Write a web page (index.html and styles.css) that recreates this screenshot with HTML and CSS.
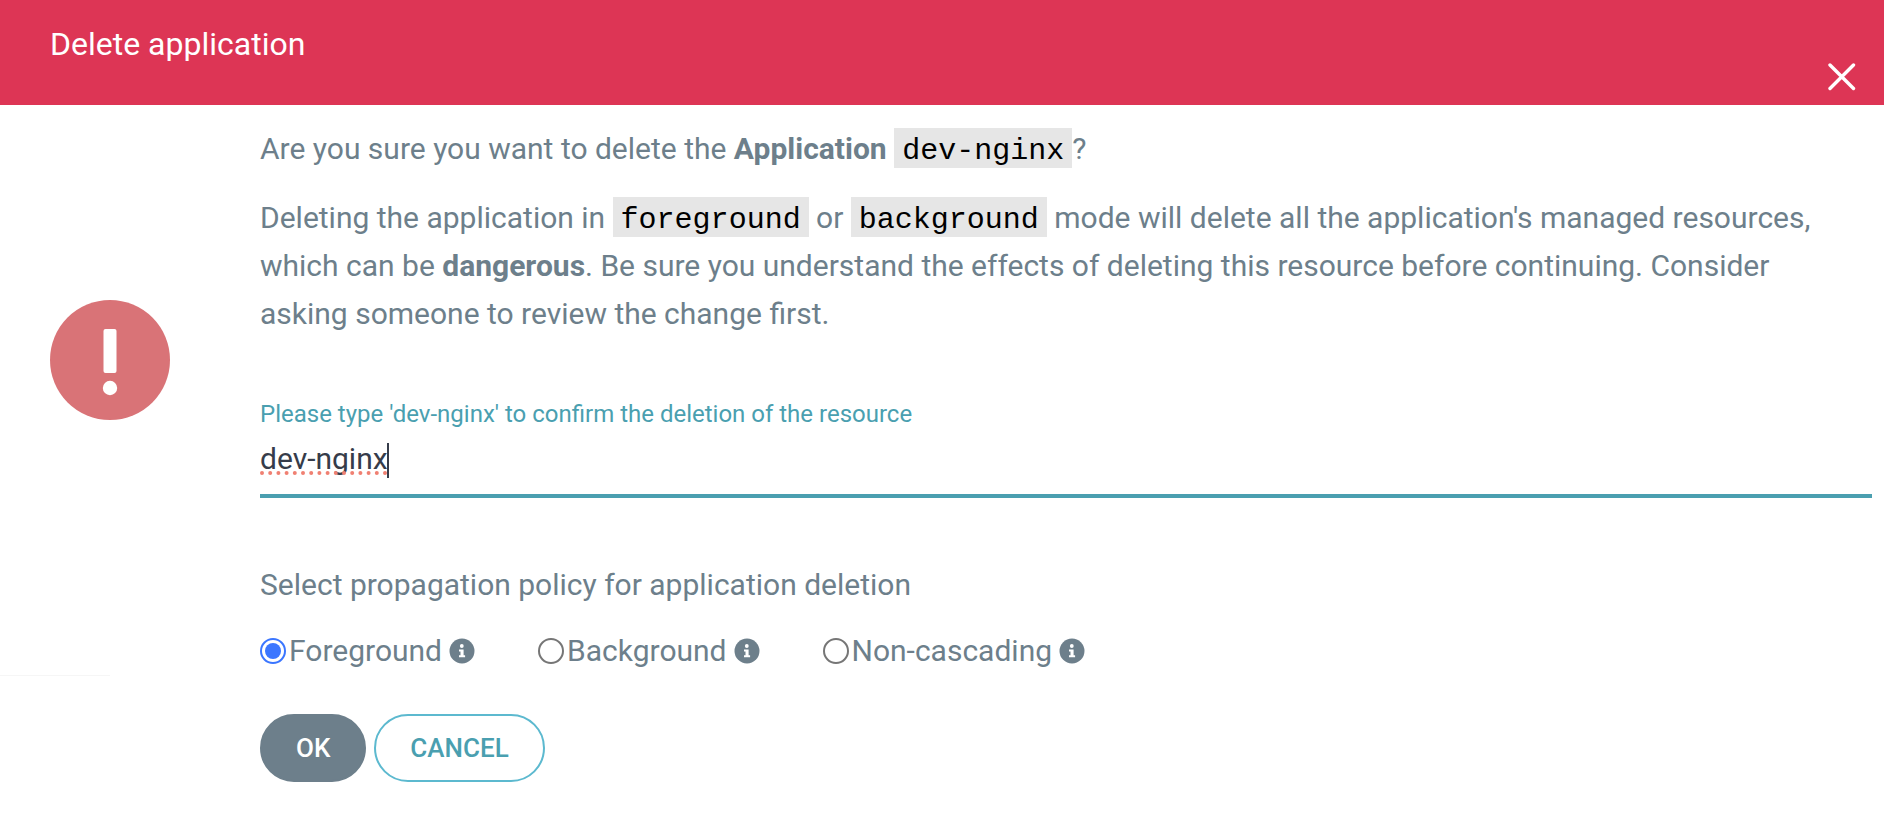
FILE: index.html
```
<!DOCTYPE html>
<html lang="en">
<head>
    <meta charset="UTF-8">
    <meta name="viewport" content="width=device-width, initial-scale=1.0">
    <title>Delete application</title>
    <link rel="stylesheet" href="styles.css">
</head>
<body>
    <div class="popup">
        <header class="popup-header">
            <h1 class="popup-title">Delete application</h1>
            <button type="button" class="popup-close" aria-label="Close">
                <svg width="28" height="28" viewBox="0 0 28 28">
                    <path d="M2 2 L25.5 25.5 M25.5 2 L2 25.5" stroke="#fff" stroke-width="3.4" stroke-linecap="round"/>
                </svg>
            </button>
        </header>

        <form class="popup-body">
            <div class="popup-icon">
                <svg width="120" height="120" viewBox="0 0 120 120">
                    <circle cx="60" cy="60" r="60" fill="#d97377"/>
                    <rect x="53.5" y="29" width="13" height="44" rx="2" fill="#fff"/>
                    <circle cx="60" cy="88" r="7.2" fill="#fff"/>
                </svg>
            </div>

            <div class="popup-content">
                <div class="message">
                    <p>Are you sure you want to delete the <strong>Application</strong> <code>dev-nginx</code>?</p>
                    <p>
                        Deleting the application in <code>foreground</code> or <code>background</code> mode will delete all the application's managed resources,
                        which can be <strong>dangerous</strong>. Be sure you understand the effects of deleting this resource before continuing. Consider
                        asking someone to review the change first.
                    </p>
                </div>

                <div class="field">
                    <label for="app-name">Please type 'dev-nginx' to confirm the deletion of the resource</label>
                    <div class="field-control">
                        <input type="text" id="app-name" value="dev-nginx" autocomplete="off">
                        <svg class="spelling" width="128" height="4" viewBox="0 0 128 4">
                            <path d="M2 2 H128" stroke="#f08072" stroke-width="4" stroke-linecap="round" stroke-dasharray="0 8.2"/>
                        </svg>
                        <span class="caret"></span>
                    </div>
                </div>

                <p class="policy-title" id="policy-title">Select propagation policy for application deletion</p>
                <div class="policy" role="radiogroup" aria-labelledby="policy-title">
                    <div class="option">
                        <input type="radio" id="foreground" name="policy" checked>
                        <label for="foreground">Foreground</label>
                        <svg class="info" viewBox="0 0 26 26">
                            <circle cx="13" cy="13" r="12.5" fill="#6d7f8b"/>
                            <circle cx="12.8" cy="8" r="1.9" fill="#fff"/>
                            <path d="M10 11.4 H14.6 V17.2 H16.1 V19.2 H10 V17.2 H11.5 V13.4 H10 Z" fill="#fff"/>
                        </svg>
                    </div>
                    <div class="option">
                        <input type="radio" id="background" name="policy">
                        <label for="background">Background</label>
                        <svg class="info" viewBox="0 0 26 26">
                            <circle cx="13" cy="13" r="12.5" fill="#6d7f8b"/>
                            <circle cx="12.8" cy="8" r="1.9" fill="#fff"/>
                            <path d="M10 11.4 H14.6 V17.2 H16.1 V19.2 H10 V17.2 H11.5 V13.4 H10 Z" fill="#fff"/>
                        </svg>
                    </div>
                    <div class="option">
                        <input type="radio" id="non-cascading" name="policy">
                        <label for="non-cascading">Non-cascading</label>
                        <svg class="info" viewBox="0 0 26 26">
                            <circle cx="13" cy="13" r="12.5" fill="#6d7f8b"/>
                            <circle cx="12.8" cy="8" r="1.9" fill="#fff"/>
                            <path d="M10 11.4 H14.6 V17.2 H16.1 V19.2 H10 V17.2 H11.5 V13.4 H10 Z" fill="#fff"/>
                        </svg>
                    </div>
                </div>

                <div class="actions">
                    <button type="submit" class="button button-ok">OK</button>
                    <button type="button" class="button button-cancel">CANCEL</button>
                </div>
            </div>
        </form>
    </div>
</body>
</html>
```

FILE: styles.css
```
* {
    box-sizing: border-box;
}
body {
    margin: 0;
    background-color: #fff;
    color: #6d7f8b;
    font-family: Roboto, sans-serif;
    font-size: 30px;
    line-height: 48px;
}
p {
    margin: 0;
}
.popup-header {
    display: flex;
    justify-content: space-between;
    align-items: flex-start;
    padding: 20px 28px 14px 50px;
    background-color: #dd3555;
    color: #fff;
}
.popup-title {
    margin: 0;
    font-size: 32px;
    font-weight: 400;
}
.popup-close {
    padding: 43px 0 0;
    border: none;
    background: none;
    cursor: pointer;
}
.popup-close svg {
    display: block;
}
.popup-body {
    position: relative;
    display: flex;
    gap: 90px;
    padding: 20px 12px 35px 50px;
}
/* faint edge of the panel behind the popup */
.popup-body::after {
    content: "";
    position: absolute;
    top: 570px;
    left: 0;
    width: 110px;
    height: 1px;
    background-color: #f6f6f6;
}
.popup-icon {
    flex: none;
    padding-top: 175px;
}
.popup-icon svg {
    display: block;
}
.popup-content {
    flex: 1;
}
.message {
    display: flex;
    flex-direction: column;
    gap: 21px;
    padding-right: 30px;
}
strong {
    font-weight: 700;
}
code {
    padding: 6px 8px 0;
    background-color: #e6e6e6;
    color: #000;
    font-family: "Liberation Mono", monospace;
    font-size: 30px;
    line-height: 30px;
}
.field {
    margin-top: 60px;
}
.field label {
    display: block;
    color: #4a9fb0;
    font-size: 24px;
    line-height: 32px;
}
.field-control {
    position: relative;
}
.field-control input {
    display: block;
    width: 100%;
    height: 68px;
    padding: 0 0 8px;
    border: none;
    border-bottom: 4px solid #4a9fb0;
    outline: none;
    background: none;
    color: #363c4a;
    font: inherit;
}
/* spell checker underline and text cursor */
.spelling {
    position: absolute;
    top: 41px;
    left: 0;
}
.caret {
    position: absolute;
    top: 13px;
    left: 127px;
    width: 2px;
    height: 35px;
    background-color: #363c4a;
}
.policy-title {
    margin-top: 63px;
}
.policy {
    display: flex;
    gap: 63px;
    margin-top: 18px;
}
.option {
    display: flex;
    align-items: center;
}
.option input {
    appearance: none;
    display: grid;
    place-content: center;
    width: 26px;
    height: 26px;
    margin: 0 3px 0 0;
    border: 2px solid #767676;
    border-radius: 50%;
}
.option input:checked {
    border-color: #3b76ff;
}
.option input:checked::before {
    content: "";
    width: 16px;
    height: 16px;
    border-radius: 50%;
    background-color: #3b76ff;
}
.info {
    width: 26px;
    height: 26px;
    margin-left: 7px;
}
.actions {
    display: flex;
    gap: 8px;
    margin-top: 39px;
}
.button {
    height: 68px;
    padding: 0 34px;
    border: 2px solid #6d7f8b;
    border-radius: 34px;
    font-family: inherit;
    font-size: 26px;
    font-weight: 500;
    cursor: pointer;
}
.button-ok {
    background-color: #6d7f8b;
    color: #fff;
}
.button-cancel {
    border-color: #5cb9cf;
    background-color: #fff;
    color: #4a9fb0;
}
```
